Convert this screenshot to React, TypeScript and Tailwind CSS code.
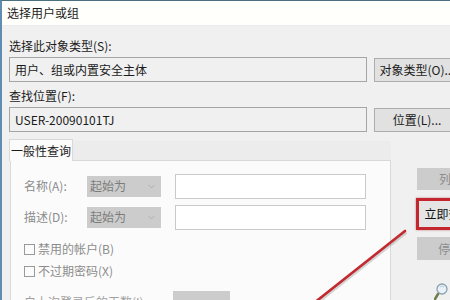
import React from 'react';
import { ChevronDown } from 'lucide-react';

const font = { fontFamily: '"Noto Sans CJK SC", "Noto Sans", sans-serif' };

function DisabledSelect() {
  return (
    <div className="w-[74px] h-[21px] bg-[#cccccc] flex items-center justify-between pl-[3px] pr-[4px] text-[12px] text-[#7c7c7c]">
      <span>起始为</span>
      <ChevronDown className="w-[11px] h-[11px] text-[#a3a3a3]" strokeWidth={1.5} />
    </div>
  );
}

function CheckRow({ label }: { label: string }) {
  return (
    <div className="flex items-center gap-[3px] h-[22px] text-[12px] text-[#8c8c8c]">
      <div className="w-[11px] h-[11px] border border-[#9a9a9a] bg-[#fbfbfb]" />
      <span>{label}</span>
    </div>
  );
}

export default function App() {
  return (
    <div
      className="relative w-[450px] h-[300px] overflow-hidden bg-[#f0f0f0] border-l-2 border-[#5f8cb3] border-t border-t-[#4d7080] text-[#1b1b1b]"
      style={font}
    >
      {/* Title */}
      <div className="h-[25px] bg-[#fffffc] flex items-center pl-[5px] text-[12px] border-b border-[#ececec]">
        选择用户或组
      </div>

      <div className="pl-[7px] pt-[12px]">
        {/* Object type */}
        <div className="text-[12px] leading-[16px]">选择此对象类型(S):</div>
        <div className="flex items-center gap-[7px] mt-[3px] w-[600px]">
          <div className="w-[358px] h-[25px] border border-[#a5a5a5] bg-[#f0f0f0] flex items-center px-[5px] text-[12px]">
            用户、组或内置安全主体
          </div>
          <div className="w-[86px] h-[24px] border border-[#adadad] bg-[#e1e1e1] flex items-center justify-center text-[12px]">
            对象类型(O)...
          </div>
        </div>

        {/* Location */}
        <div className="text-[12px] leading-[16px] mt-[6px]">查找位置(F):</div>
        <div className="flex items-center gap-[7px] mt-[3px] w-[600px]">
          <div className="w-[358px] h-[25px] border border-[#a5a5a5] bg-[#f0f0f0] flex items-center px-[5px] text-[12px]">
            USER-20090101TJ
          </div>
          <div className="w-[86px] h-[24px] border border-[#adadad] bg-[#e1e1e1] flex items-center justify-center text-[12px]">
            位置(L)...
          </div>
        </div>

        {/* Tabs + right buttons */}
        <div className="flex mt-[7px] w-[600px]">
          <div className="w-[381px] ml-[1px]">
            <div className="flex items-end h-[22px]">
              <div className="w-[64px] h-[22px] -ml-[1px] border border-b-0 border-[#d9d9d9] bg-[#fbfbfb] flex items-center justify-center text-[12px] relative z-10">
                一般性查询
              </div>
              <div className="flex-1 h-[20px] bg-[#ececec] border-b border-[#d9d9d9]" />
            </div>
            <div className="h-[160px] bg-[#fbfbfb] border border-t-0 border-[#d9d9d9] pl-[13px] pt-[12px]">
              <div className="flex items-center h-[26px]">
                <span className="w-[63px] text-[12px] text-[#8c8c8c]">名称(A):</span>
                <DisabledSelect />
                <div className="ml-[14px] w-[191px] h-[25px] border border-[#c9c9c9] bg-white" />
              </div>
              <div className="flex items-center h-[26px] mt-[5px]">
                <span className="w-[63px] text-[12px] text-[#8c8c8c]">描述(D):</span>
                <DisabledSelect />
                <div className="ml-[14px] w-[191px] h-[25px] border border-[#c9c9c9] bg-white" />
              </div>
              <div className="mt-[8px]">
                <CheckRow label="禁用的帐户(B)" />
                <CheckRow label="不过期密码(X)" />
              </div>
              <div className="flex items-start mt-[9px] h-[20px]">
                <span className="w-[149px] text-[12px] text-[#a0a0a0] pt-[2px]">自上次登录后的天数(I):</span>
                <div className="w-[57px] h-[20px] bg-[#cccccc]" />
              </div>
            </div>
          </div>

          <div className="ml-[26px] pt-[29px] flex flex-col">
            <div className="w-[82px] h-[22px] bg-[#cccccc] flex items-center justify-center text-[12px] text-[#8c8c8c]">
              列(C)...
            </div>
            <div className="mt-[8px] w-[82px] h-[32px] border-[3px] border-[#c4262e] -ml-[1px] flex items-center justify-center bg-[#e5e5e5] shadow-[0_0_2px_rgba(150,20,20,0.5)]">
              <span className="text-[12px] text-[#111]">立即查找(N)</span>
            </div>
            <div className="mt-[7px] w-[82px] h-[23px] bg-[#cccccc] flex items-center justify-center text-[12px] text-[#8c8c8c]">
              停止(T)
            </div>
            <div className="mt-[22px] ml-[17px]">
              <svg width="16" height="18" viewBox="0 0 16 18">
                <circle cx="8" cy="7" r="5" fill="#e9f1f6" stroke="#8aa3b3" strokeWidth="1.3" />
                <path d="M4 12 L1 17" stroke="#6f7f4a" strokeWidth="2.5" strokeLinecap="round" />
                <path d="M6 5 Q8 3 10 5" stroke="#b9cad5" strokeWidth="1" fill="none" />
              </svg>
            </div>
          </div>
        </div>
      </div>

      {/* Annotation arrow */}
      <svg className="absolute left-0 top-0 pointer-events-none" width="450" height="300">
        <line x1="403" y1="230" x2="312" y2="302" stroke="#8a8a8a" strokeOpacity="0.35" strokeWidth="4" transform="translate(1,1)" />
        <line x1="403" y1="230" x2="312" y2="302" stroke="#c22a30" strokeWidth="2.6" strokeLinecap="round" />
      </svg>
    </div>
  );
}
